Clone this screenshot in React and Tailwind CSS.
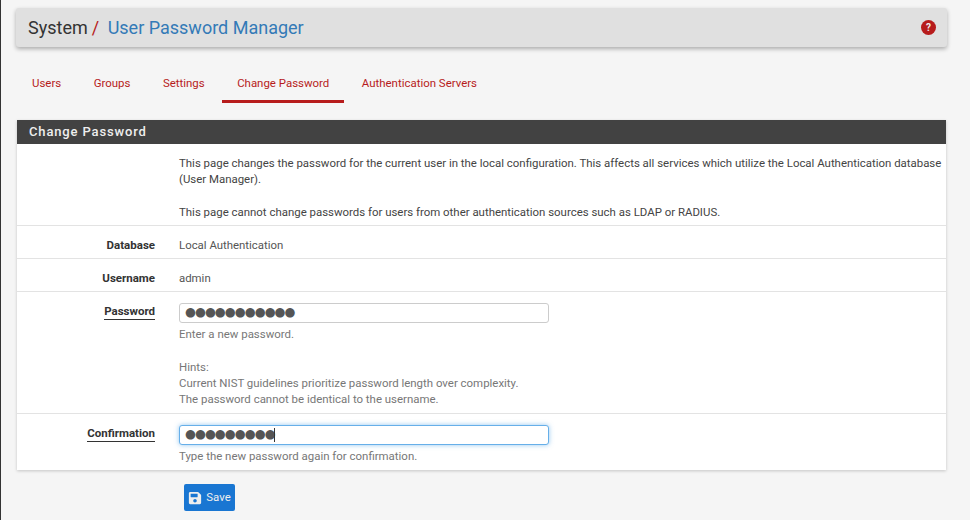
import React from "react";
import { FaSave } from "react-icons/fa";

const Tab = ({ label, active }) => (
  <a className={`flex h-[39px] items-center px-[15px] text-[11.45px] text-[#b71c1c] ${active ? "border-b-[3px] border-[#b71c1c] pt-[3px]" : ""}`}>{label}</a>
);

const Row = ({ label, children, underline, className = "" }) => (
  <div className={`flex border-t border-[#e3e3e3] ${className}`}>
    <div className="w-[138px] shrink-0 pt-[10px] text-right text-[11.5px] font-bold leading-[18px] text-[#333]">
      <span className={underline ? "border-b border-[#333] pb-[1px]" : ""}>{label}</span>
    </div>
    <div className="min-w-0 flex-1 pl-[24px] pt-[10px] text-[11.4px] leading-[18px] text-[#555]">{children}</div>
  </div>
);

const Pw = ({ value, focus }) => (
  <div className="relative mt-[1px] w-[370px]">
    <input
      type="text"
      readOnly
      value={value}
      className={`block h-[20px] w-full rounded-[3px] border bg-white px-[5px] pb-[4px] font-['DejaVu_Sans',sans-serif] text-[12.5px] tracking-[-0.95px] text-[#555] outline-none ${focus ? "border-[#66afe9] shadow-[0_0_5px_rgba(102,175,233,0.7)]" : "border-[#ccc]"}`}
    />
    {focus && <div className="absolute left-[95px] top-[3px] h-[14px] w-px bg-[#333]" />}
  </div>
);

export default function App() {
  return (
    <div className="h-[520px] w-[970px] overflow-hidden border-l border-[#333] bg-[#f5f5f5] pl-[15px] pr-[23px] pt-[8px] font-['Roboto',sans-serif]">
      <div className="flex h-[39px] items-center justify-between rounded-[3px] bg-[#e0e0e0] pl-[12px] pr-[11px] shadow-[0_2px_4px_rgba(0,0,0,0.3)]">
        <h1 className="text-[18px] font-normal text-[#333]">
          System<span className="ml-[4px] mr-[8.5px] text-[#b71c1c]">/</span>
          <span className="text-[#337ab7]">User Password Manager</span>
        </h1>
        <div className="flex h-[15px] w-[15px] items-center justify-center rounded-full bg-[#b71c1c] text-[10px] font-bold text-[#eee]">?</div>
      </div>

      <nav className="ml-[1px] mt-[17px] flex h-[39px] gap-[2.5px]">
        <Tab label="Users" />
        <Tab label="Groups" />
        <Tab label="Settings" />
        <Tab label="Change Password" active />
        <Tab label="Authentication Servers" />
      </nav>

      <section className="ml-[1px] mt-[17px] w-[929px] bg-white shadow-[0_1px_3px_rgba(0,0,0,0.2)]">
        <h2 className="flex h-[24px] items-center bg-[#424242] pl-[12px] text-[13px] font-medium tracking-[0.85px] text-[#eee]">Change Password</h2>
        <div className="flex h-[81px]">
          <div className="w-[162px] shrink-0" />
          <div className="pt-[11px] text-[11.43px] leading-[16.3px] text-[#444]">
            <p>This page changes the password for the current user in the local configuration. This affects all services which utilize the Local Authentication database (User Manager).</p>
            <p className="mt-[16px]">This page cannot change passwords for users from other authentication sources such as LDAP or RADIUS.</p>
          </div>
        </div>
        <Row label="Database" className="h-[33px]">Local Authentication</Row>
        <Row label="Username" className="h-[33px]">admin</Row>
        <Row label="Password" underline className="h-[122px]">
          <Pw value="●●●●●●●●●●●" />
          <div className="mt-[3px] text-[11.45px] leading-[16px] text-[#777]">
            <p>Enter a new password.</p>
            <p className="mt-[17px]">Hints:</p>
            <p>Current NIST guidelines prioritize password length over complexity.</p>
            <p>The password cannot be identical to the username.</p>
          </div>
        </Row>
        <Row label="Confirmation" underline className="h-[57px]">
          <Pw value="●●●●●●●●●" focus />
          <p className="mt-[3px] text-[11.45px] leading-[16px] text-[#777]">Type the new password again for confirmation.</p>
        </Row>
      </section>

      <button className="ml-[168px] mt-[14px] flex h-[27px] w-[51px] items-center justify-center gap-[4px] rounded-[2px] bg-[#1976d2] text-[11.4px] text-[#eee]">
        <FaSave className="text-[14px]" />
        <span className="pt-[1px]">Save</span>
      </button>
    </div>
  );
}
